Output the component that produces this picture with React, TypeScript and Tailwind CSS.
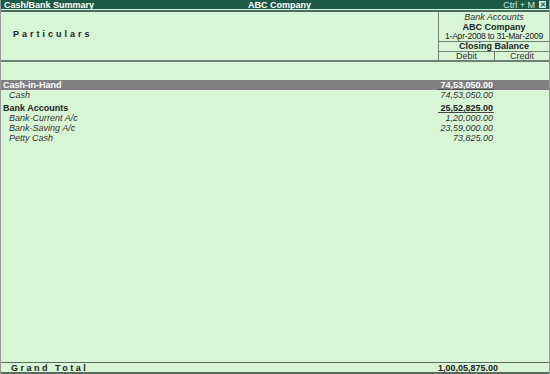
import React from 'react';

// Cash/Bank summary rows
interface Row {
  name: string;
  amount: string;
  kind: 'group' | 'item' | 'selected';
  underline?: boolean;
  gap?: boolean;
}

const rows: Row[] = [
  { name: 'Cash-in-Hand', amount: '74,53,050.00', kind: 'selected', underline: true },
  { name: 'Cash', amount: '74,53,050.00', kind: 'item' },
  { name: 'Bank Accounts', amount: '25,52,825.00', kind: 'group', underline: true, gap: true },
  { name: 'Bank-Current A/c', amount: '1,20,000.00', kind: 'item' },
  { name: 'Bank-Saving A/c', amount: '23,59,000.00', kind: 'item' },
  { name: 'Petty Cash', amount: '73,825.00', kind: 'item' },
];

export default function App() {
  return (
    <div
      className="w-[550px] h-[374px] flex flex-col bg-[#d8f5d6] text-[9px] leading-[10px] text-[#222] overflow-hidden border-x border-[#9a9a9a]"
      style={{ fontFamily: '"Liberation Sans", Arial, sans-serif' }}
    >
      {/* Title bar */}
      <div className="h-[9px] shrink-0 bg-[#1d5a45] text-white font-bold flex items-center px-[3px] relative">
        <span>Cash/Bank Summary</span>
        <span className="absolute left-[247px]">ABC Company</span>
        <span className="ml-auto font-normal text-[#cfe7dc] mr-[4px]">Ctrl + M</span>
        <span className="w-[7px] h-[7px] bg-[#d8e6e0] text-[#1d5a45] text-[7px] leading-[7px] flex items-center justify-center">✕</span>
      </div>
      <div className="h-[1px] shrink-0 bg-[#d8f5d6]" />
      <div className="h-[2px] shrink-0 bg-[#4d6b5e]" />

      {/* Column header */}
      <div className="h-[50px] shrink-0 flex border-b-2 border-[#6f8077]">
        <div className="flex-1 flex items-center pl-[12px] pb-[4px] font-bold tracking-[3px] text-[#222]">
          Particulars
        </div>
        <div className="w-[111px] border-l border-[#6f8077] flex flex-col text-center">
          <div className="h-[10px] leading-[10px] italic text-[#333]">Bank Accounts</div>
          <div className="h-[10px] leading-[10px] font-bold">ABC Company</div>
          <div className="h-[10px] border-b border-[#6f8077] text-[8.5px] leading-[9px] tracking-[-0.2px]">
            1-Apr-2008 to 31-Mar-2009
          </div>
          <div className="h-[10px] leading-[9px] border-b border-[#6f8077] font-bold">Closing Balance</div>
          <div className="flex flex-1 text-[#333]">
            <div className="w-[56px] border-r border-[#6f8077] h-full leading-[9px]">Debit</div>
            <div className="flex-1 h-full leading-[9px]">Credit</div>
          </div>
        </div>
      </div>

      {/* Body */}
      <div className="flex-1 pt-[18px]">
        {rows.map((r) => (
          <div
            key={r.name}
            className={`flex h-[10px] items-center ${r.gap ? 'mt-[3px]' : ''} ${
              r.kind === 'selected' ? 'bg-[#808080] text-white font-bold' : ''
            }`}
          >
            <div
              className={`flex-1 ${r.kind === 'item' ? 'pl-[8px] italic text-[#333]' : 'pl-[2px] font-bold'}`}
            >
              {r.name}
            </div>
            <div
              className={`w-[56px] mr-[55px] text-right pr-[1px] h-full ${
                r.kind === 'item' ? 'italic text-[#333]' : 'font-bold'
              } ${r.underline ? 'border-b border-[#4a4a4a]' : ''}`}
            >
              {r.amount}
            </div>
          </div>
        ))}
      </div>

      {/* Grand total */}
      <div className="h-[12px] shrink-0 flex items-center border-t border-b-2 border-[#5a6b62]">
        <div className="flex-1 pl-[10px] font-bold tracking-[2.5px]">Grand Total</div>
        <div className="w-[56px] mr-[55px] text-right pr-[1px] font-bold">1,00,05,875.00</div>
      </div>
    </div>
  );
}
